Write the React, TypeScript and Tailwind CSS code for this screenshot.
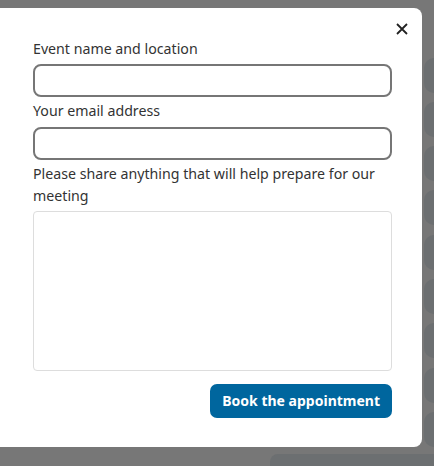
import React from "react";

const blocks = [58, 102, 146, 190, 235, 279, 323, 368, 412];

export default function App() {
  return (
    <div className="relative w-[434px] h-[466px] overflow-hidden bg-[#777777]" style={{ fontFamily: '"Noto Sans", sans-serif' }}>
      {blocks.map((t) => (
        <div key={t} className="absolute left-[424px] w-[40px] h-[35px] rounded-[10px] bg-[#6c6f71]" style={{ top: t }} />
      ))}
      <div className="absolute left-[270px] top-[454px] w-[200px] h-[40px] rounded-[8px] bg-[#6c6f71]" />
      <div className="absolute left-[-16px] top-[8px] w-[438px] h-[439px] bg-white rounded-[8px] pl-[49px] pr-[30px] pt-[30px]">
        <button className="absolute right-[11px] top-[12px] w-[18px] h-[18px] flex items-center justify-center text-[#222]">
          <svg width="12" height="12" viewBox="0 0 12 12" fill="none" stroke="currentColor" strokeWidth="1.8">
            <path d="M1 1L11 11M11 1L1 11" />
          </svg>
        </button>
        <div className="flex flex-col text-[14.2px] leading-[22px] text-[#333333]">
          <label>Event name and location</label>
          <input className="mt-[4px] h-[33px] rounded-[8px] border-2 border-[#767676] outline-none" />
          <label className="mt-[3px]">Your email address</label>
          <input className="mt-[5px] h-[33px] rounded-[8px] border-2 border-[#767676] outline-none" />
          <label className="mt-[3px]">Please share anything that will help prepare for our meeting</label>
          <textarea className="mt-[4px] h-[160px] rounded-[4px] border border-[#dddddd] outline-none resize-none" />
          <div className="flex justify-end mt-[13px]">
            <button className="h-[34px] px-[12px] rounded-[7px] bg-[#00669e] text-white font-bold text-[14px]">Book the appointment</button>
          </div>
        </div>
      </div>
    </div>
  );
}
